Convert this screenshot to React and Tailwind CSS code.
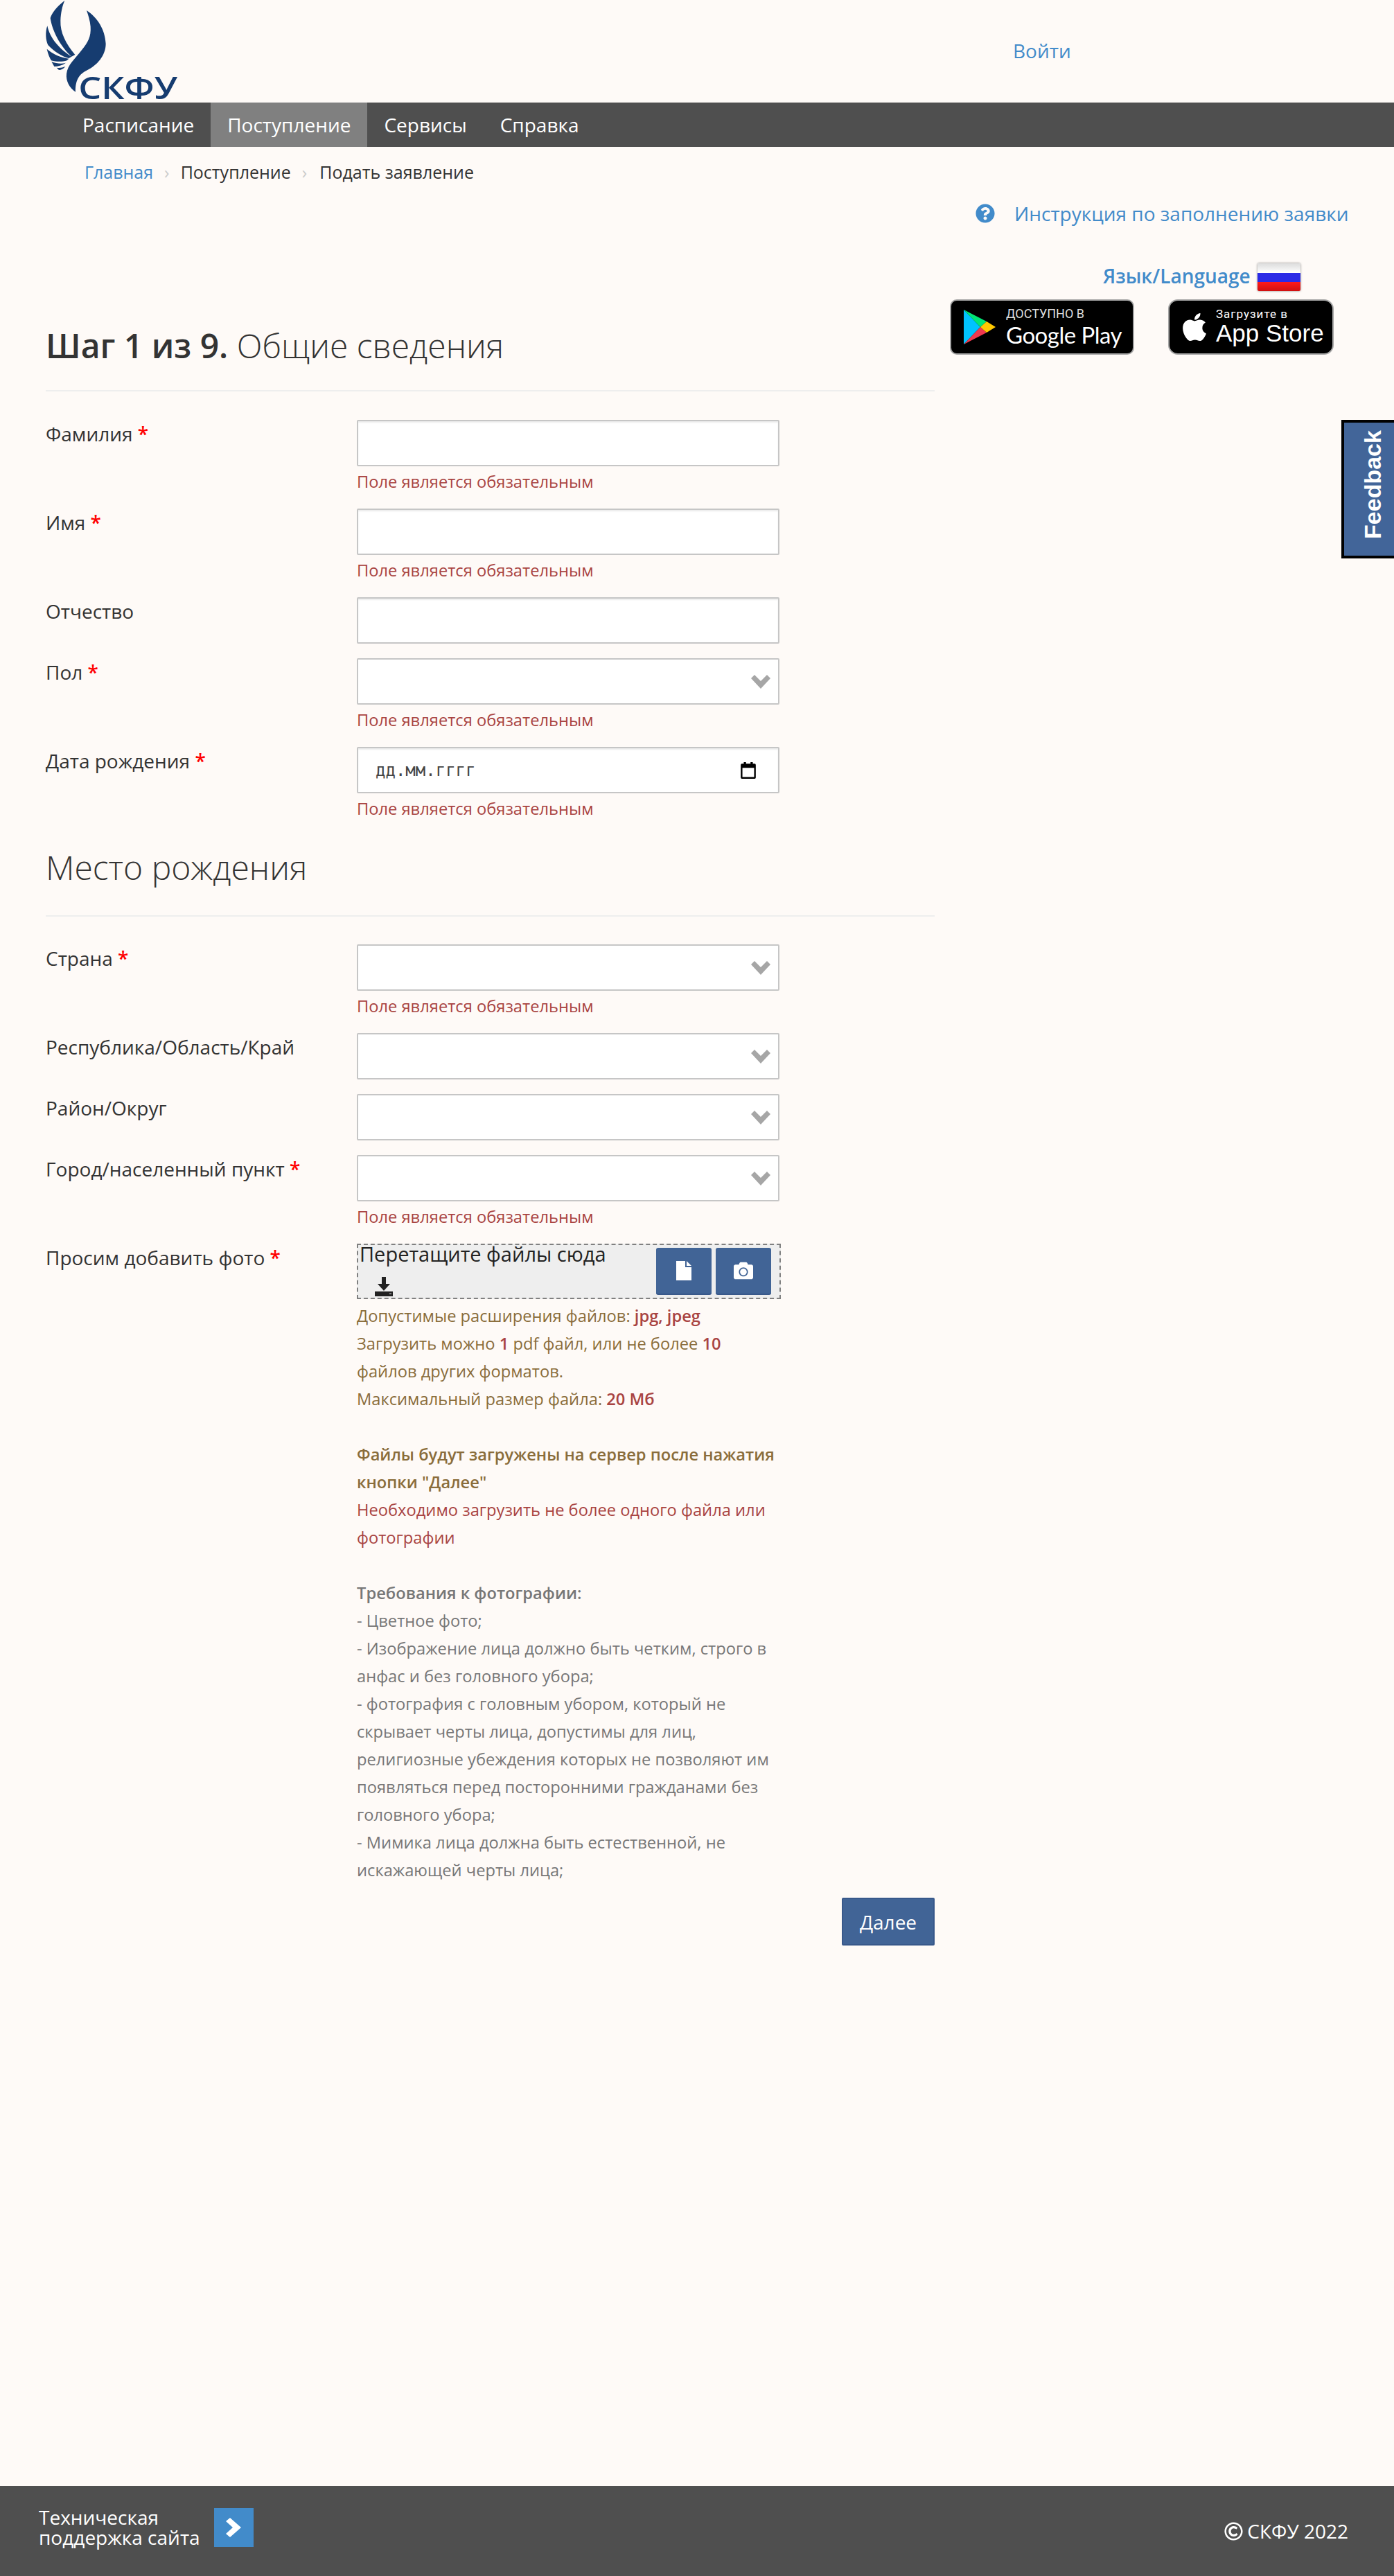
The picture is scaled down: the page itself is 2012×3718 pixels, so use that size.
import { FaCamera, FaApple, FaQuestionCircle, FaRegCopyright } from 'react-icons/fa';

const required = 'Поле является обязательным';

function Logo() {
  return (
    <svg viewBox="0 0 720 444" className="ml-[40px] h-[148px] w-[240px]">
      <g fill="#163c70">
        <path d="M160 2C125 30 105 55 98 78C105 130 140 200 190 245L205 237C165 190 140 140 142 90C143 55 150 25 160 2Z" />
        <path d="M85 112C75 140 78 175 88 195C115 225 150 245 178 252L190 245C140 215 95 165 85 112Z" />
        <path d="M83 212C88 235 95 250 102 262C125 268 150 268 170 262L178 254C145 250 110 235 83 212Z" />
        <path d="M103 267L115 288C130 288 150 283 165 272C145 278 125 275 103 267Z" />
        <path d="M125 293L135 303C145 303 155 298 163 288C150 293 138 295 125 293Z" />
        <path d="M255 45C300 75 335 125 338 190C338 240 300 285 255 305C225 320 205 345 207 398C180 380 165 350 168 320C172 280 205 255 235 215C260 185 275 160 272 115C270 90 262 65 255 45Z" />
        <text x="220" y="428" fontFamily="Open Sans" fontWeight="600" fontSize="136" textLength="428" lengthAdjust="spacingAndGlyphs">СКФУ</text>
      </g>
    </svg>
  );
}

function Label({ text, star }) {
  return (
    <div className="w-[449px] shrink-0 text-[28px] leading-[40px] text-[#333]">
      {text}
      {star && <span className="font-semibold text-[#f00]"> *</span>}
    </div>
  );
}

function Row({ label, star, error, children }) {
  return (
    <div className="mb-[21px] flex">
      <Label text={label} star={star} />
      <div className="w-[610px]">
        {children}
        {error && <div className="h-[40px] text-[23.7px] leading-[44px] text-[#a94442]">{required}</div>}
      </div>
    </div>
  );
}

function TextInput() {
  return <div className="h-[67px] rounded-[2px] border-2 border-[#c6c6c6] bg-white shadow-[inset_0_2px_2px_rgba(0,0,0,0.075)]" />;
}

function SelectInput() {
  return (
    <div className="flex h-[67px] items-center justify-end rounded-[2px] border-2 border-[#c6c6c6] bg-white pr-[11px]">
      <svg viewBox="0 0 28 21" className="h-[21px] w-[28px]">
        <path d="M0 6L5 1 14 10 23 1 28 6 14 21Z" fill="#a6a6a6" />
      </svg>
    </div>
  );
}

function DateInput() {
  return (
    <div className="flex h-[67px] items-center justify-between rounded-[2px] border-2 border-[#c6c6c6] bg-white pl-[25px] pr-[30px] shadow-[inset_0_2px_2px_rgba(0,0,0,0.075)]">
      <span className="font-['DejaVu_Sans_Mono',monospace] text-[24px] text-[#444]">дд.мм.гггг</span>
      <svg viewBox="0 0 24 24" className="h-[26px] w-[26px]">
        <path d="M6 1h3v2h6V1h3v2h2.500A1.500 1.500 0 0 1 22 4.500V21.500A1.500 1.500 0 0 1 20.500 23H3.500A1.500 1.500 0 0 1 2 21.500V4.500A1.500 1.500 0 0 1 3.500 3H6zM4.200 8.500V20.800H19.800V8.500z" fill="#000" />
      </svg>
    </div>
  );
}

function UploadButton({ children }) {
  return (
    <div className="flex h-[68px] w-[80px] items-center justify-center rounded-[3px] border-b-2 border-[#38588a] bg-[#416496] text-white">
      {children}
    </div>
  );
}

function Upload() {
  return (
    <div className="flex h-[80px] w-[612px] justify-between border-2 border-dashed border-[#808080] bg-[#eeeeee] pl-[2px] pr-[12px]">
      <div className="text-[29px] leading-[26px] text-[#222]">
        Перетащите файлы сюда
        <svg viewBox="0 0 26 28" className="ml-[22px] mt-[20px] h-[28px] w-[26px]">
          <path d="M10 0h6v10h6l-9 10-9-10h6z" fill="#222" />
          <path d="M0 21h26v7H0z" fill="#222" />
          <path d="M21 24h3v1h-3z" fill="#eee" />
        </svg>
      </div>
      <div className="flex gap-[6px] pt-[4px]">
        <UploadButton>
          <svg viewBox="0 0 22 28" className="h-[28px] w-[22px]">
            <path d="M0 0h13v9h9v19H0zM15 0l7 7h-7z" fill="#fff" />
          </svg>
        </UploadButton>
        <UploadButton>
          <FaCamera className="text-[28px]" />
        </UploadButton>
      </div>
    </div>
  );
}

function GooglePlayBadge() {
  return (
    <div className="flex h-[80px] w-[266px] items-center rounded-[10px] border-2 border-[#a6a6a6] bg-black pl-[18px] text-white">
      <svg viewBox="0 0 46 52" className="h-[52px] w-[46px] shrink-0">
        <path d="M0 1V51L24 26z" fill="#00c3ff" />
        <path d="M0 1L24 26 33 18z" fill="#00e676" />
        <path d="M0 51L24 26 33 34z" fill="#f0394f" />
        <path d="M33 18L24 26 33 34 46 26z" fill="#ffc800" />
      </svg>
      <div className="ml-[15px] whitespace-nowrap">
        <div className="font-['Roboto',sans-serif] text-[18px] leading-[22px] text-[#ddd]">ДОСТУПНО В</div>
        <div className="font-['Lato',sans-serif] text-[33px] leading-[38px] tracking-[-0.5px]">Google Play</div>
      </div>
    </div>
  );
}

function AppStoreBadge() {
  return (
    <div className="flex h-[80px] w-[239px] items-center rounded-[14px] border-2 border-[#a6a6a6] bg-black pl-[13px] text-white">
      <FaApple className="shrink-0 text-[46px]" />
      <div className="ml-[8px] whitespace-nowrap">
        <div className="font-['Roboto',sans-serif] text-[17px] leading-[18px] tracking-[1px]">Загрузите в</div>
        <div className="font-['Liberation_Sans',sans-serif] text-[35px] leading-[38px]">App Store</div>
      </div>
    </div>
  );
}

function Flag() {
  return (
    <div className="ml-[10px] mt-[5px] flex h-[40px] w-[62px] flex-col overflow-hidden rounded-[2px] shadow-[0_0_3px_rgba(0,0,0,0.5)]">
      <div className="h-[14px] bg-gradient-to-b from-[#dcdcdc] to-white" />
      <div className="h-[13px] bg-[#2a2ae6]" />
      <div className="h-[13px] bg-gradient-to-b from-[#ff1a1a] to-[#d01010]" />
    </div>
  );
}

export default function App() {
  return (
    <div className="relative flex min-h-[3718px] flex-col bg-[#fefaf7] font-['Open_Sans',sans-serif] text-[#333]">
      <header className="flex h-[148px] items-start">
        <Logo />
        <a className="ml-[1182px] mt-[54px] text-[28px] leading-[38px] text-[#428bca]">Войти</a>
      </header>

      <nav className="flex h-[64px] items-center bg-[#4f4f4f] pl-[95px] text-[28px] text-white">
        <a className="flex h-full items-center pl-[24px] pr-[25px]">Расписание</a>
        <a className="-ml-[1px] flex h-full items-center bg-[#808080] px-[24px]">Поступление</a>
        <a className="flex h-full items-center px-[24px]">Сервисы</a>
        <a className="flex h-full items-center px-[24px]">Справка</a>
      </nav>

      <div className="flex h-[74px] items-center gap-[16px] pl-[122px] text-[25px]">
        <a className="text-[#428bca]">Главная</a>
        <span className="text-[#ccc]">›</span>
        <span>Поступление</span>
        <span className="text-[#ccc]">›</span>
        <span className="ml-[2px]">Подать заявление</span>
      </div>

      <div className="flex">
        <main className="w-[1349px] shrink-0 pl-[66px]">
          <h1 className="mt-[180px] border-b-2 border-[#eeeeee] pb-[31px] text-[48px] font-light leading-[66px]">
            <b className="font-semibold">Шаг 1 из 9.</b> Общие сведения
          </h1>
          <div className="mt-[41px]">
            <Row label="Фамилия" star error><TextInput /></Row>
            <Row label="Имя" star error><TextInput /></Row>
            <Row label="Отчество"><TextInput /></Row>
            <Row label="Пол" star error><SelectInput /></Row>
            <Row label="Дата рождения" star error><DateInput /></Row>
          </div>

          <h2 className="mt-[34px] border-b-2 border-[#eeeeee] pb-[36px] text-[48px] font-light leading-[66px]">Место рождения</h2>
          <div className="mt-[40px]">
            <Row label="Страна" star error><SelectInput /></Row>
            <Row label="Республика/Область/Край"><SelectInput /></Row>
            <Row label="Район/Округ"><SelectInput /></Row>
            <Row label="Город/населенный пункт" star error><SelectInput /></Row>
          </div>

          <div className="flex">
            <Label text="Просим добавить фото" star />
            <div className="w-[610px]">
              <Upload />
              <div className="mt-[4px] text-[23.7px] leading-[40px]">
                <div className="text-[#8a6d3b]">
                  Допустимые расширения файлов: <b className="font-semibold text-[#a94442]">jpg, jpeg</b>
                  <br />
                  Загрузить можно <b className="font-semibold text-[#a94442]">1</b> pdf файл, или не более <b className="font-semibold text-[#a94442]">10</b> файлов других форматов.
                  <br />
                  Максимальный размер файла: <b className="font-semibold text-[#a94442]">20 Мб</b>
                </div>
                <div className="mt-[40px] font-semibold text-[#8a6d3b]">Файлы будут загружены на сервер после нажатия кнопки "Далее"</div>
                <div className="text-[#a94442]">Необходимо загрузить не более одного файла или фотографии</div>
                <div className="mt-[40px] text-[#777]">
                  <b className="font-semibold">Требования к фотографии:</b>
                  <br />- Цветное фото;
                  <br />- Изображение лица должно быть четким, строго в анфас и без головного убора;
                  <br />- фотография с головным убором, который не скрывает черты лица, допустимы для лиц, религиозные убеждения которых не позволяют им появляться перед посторонними гражданами без головного убора;
                  <br />- Мимика лица должна быть естественной, не искажающей черты лица;
                </div>
              </div>
            </div>
          </div>
          <div className="mt-[20px] flex justify-end">
            <button className="h-[69px] w-[134px] rounded-[2px] border-2 border-[#38588a] bg-[#416496] text-[28px] text-white">Далее</button>
          </div>
        </main>

        <aside className="flex-1 pl-[22px]">
          <div className="mt-[6px] flex h-[32px] items-center pl-[37px]">
            <FaQuestionCircle className="text-[28px] text-[#428bca]" />
            <a className="ml-[28px] whitespace-nowrap text-[28px] text-[#428bca]">Инструкция по заполнению заявки</a>
          </div>
          <div className="mt-[51px] flex items-center pl-[221px]">
            <a className="whitespace-nowrap text-[28px] font-semibold text-[#428bca]">Язык/Language</a>
            <Flag />
          </div>
          <div className="mt-[12px] flex gap-[49px]">
            <GooglePlayBadge />
            <AppStoreBadge />
          </div>
        </aside>
      </div>

      <footer className="mt-auto flex h-[130px] items-center justify-between bg-[#4f4f4f] pb-[10px] pl-[56px] pr-[66px] text-white">
        <div className="flex items-center">
          <div className="text-[28px] leading-[29px]">
            Техническая
            <br />
            поддержка сайта
          </div>
          <div className="ml-[20px] flex h-[56px] w-[57px] items-center justify-center bg-[#428bca]">
            <svg viewBox="0 0 22 28" className="h-[28px] w-[22px]">
              <path d="M6 0L22 14 6 28 0 23 10 14 0 5Z" fill="#fff" />
            </svg>
          </div>
        </div>
        <div className="mt-[10px] flex items-center gap-[6px] text-[28px]">
          <FaRegCopyright className="text-[27px]" />
          СКФУ 2022
        </div>
      </footer>

      <div className="absolute left-[1936px] top-[606px] flex h-[200px] w-[76px] items-center justify-center border-y-4 border-l-4 border-black bg-[#426599] pb-[14px] pl-[10px]">
        <span className="-rotate-90 font-['Liberation_Sans',sans-serif] text-[34px] font-bold text-white">Feedback</span>
      </div>
    </div>
  );
}
